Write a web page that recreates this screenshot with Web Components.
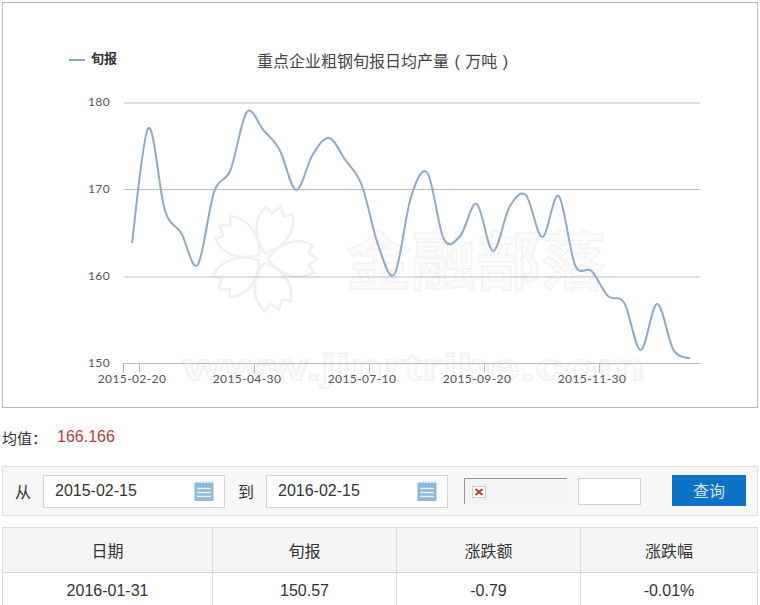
<!DOCTYPE html>
<html lang="zh">
<head>
<meta charset="UTF-8" />
<title>重点企业粗钢旬报日均产量</title>
<style>
  html, body { margin: 0; padding: 0; height: 605px; overflow: hidden; background: #fff; }
  body { padding: 2px 2px 0; box-sizing: border-box; font-family: "Liberation Sans", "Noto Sans CJK SC", sans-serif; color: #333; }
</style>
</head>
<body>
  <chart-panel></chart-panel>
  <avg-line value="166.166">均值：</avg-line>
  <filter-bar>
    <date-field slot="from" value="2015-02-15"></date-field>
    <date-field slot="to" value="2016-02-15"></date-field>
  </filter-bar>
  <data-table></data-table>

<script>
const CJK = '"Liberation Sans", "Noto Sans CJK SC", sans-serif';

// y pixel of every ten-day report, x step is fixed
const POINTS = [243,128,210,233,265,192,170,112,130,150,190,155,138,160,185,245,274,197,173,239,236,204,251,207,195,237,196,265,271,296,303,350,304,350,358.5];

function curvePath(ys) {
	const pts = ys.map((y, i) => [132 + i * 16.41, y]);
	let d = `M${pts[0][0]} ${pts[0][1]}`;
	for (let i = 0; i < pts.length - 1; i++) {
		const p0 = pts[i - 1] || pts[i];
		const p1 = pts[i];
		const p2 = pts[i + 1];
		const p3 = pts[i + 2] || p2;
		const c1x = p1[0] + (p2[0] - p0[0]) / 6;
		const c1y = p1[1] + (p2[1] - p0[1]) / 6;
		const c2x = p2[0] - (p3[0] - p1[0]) / 6;
		const c2y = p2[1] - (p3[1] - p1[1]) / 6;
		d += ` C${c1x.toFixed(1)} ${c1y.toFixed(1)} ${c2x.toFixed(1)} ${c2y.toFixed(1)} ${p2[0].toFixed(1)} ${p2[1]}`;
	}
	return d;
}

class ChartPanel extends HTMLElement {
	constructor() {
		super();
		this.attachShadow({ mode: 'open' });
	}

	connectedCallback() {
		const grid = [[103, '180'], [189.5, '170'], [277, '160'], [363.5, '150']];
		const ticks = [[139, '2015-02-20'], [254, '2015-04-30'], [369, '2015-07-10'], [484, '2015-09-20'], [599, '2015-11-30']];
		const petal = 'M0 -5 C-16 -16 -24 -34 -15 -49 L-8 -45 L-2 -54 L5 -46 L12 -52 C22 -36 16 -16 0 -5 Z';
		this.shadowRoot.innerHTML = `
		<style>
			:host { display: block; height: 406px; box-sizing: border-box; border: 1px solid #b9b9b9; background: #fff; }
			svg { display: block; width: 754px; height: 404px; }
			text { font-family: ${CJK}; }
			.axis { font-family: Lato, sans-serif; font-size: 12px; fill: #555; letter-spacing: 0.4px; }
			.mark { font-weight: 700; fill: #fbfbfb; stroke: #f3f3f3; stroke-width: 1.5; }
		</style>
		<svg viewBox="3 3 754 404">
			<g fill="none" stroke="#f0f0f0" stroke-width="2.5" transform="translate(263 258)">
				${[0, 72, 144, 216, 288].map(a => `<path d="${petal}" transform="rotate(${a + 21})"/>`).join('')}
			</g>
			<text class="mark" x="346" y="284" font-size="63" textLength="260" lengthAdjust="spacingAndGlyphs">金融部落</text>
			<text class="mark" x="183" y="380" font-size="36" textLength="462" lengthAdjust="spacingAndGlyphs">www.jinrtribe.com</text>
			<line x1="69" x2="85" y1="60" y2="60" stroke="#90a8c8" stroke-width="2"/>
			<text x="91" y="63" font-size="13" font-weight="700" fill="#333">旬报</text>
			<text x="257" y="67" font-size="16" fill="#444" word-spacing="1">重点企业粗钢旬报日均产量 ( 万吨 )</text>
			${grid.map(([y, t]) => `
				<line x1="124" x2="700" y1="${y}" y2="${y}" stroke="#b8bcc4"/>
				<text class="axis" x="88" y="${y + 3}">${t}</text>`).join('')}
			<line x1="123.5" x2="123.5" y1="363" y2="373" stroke="#b8bcc4"/>
			${ticks.map(([x, t]) => `
				<line x1="${x + 0.5}" x2="${x + 0.5}" y1="363" y2="373" stroke="#b8bcc4"/>
				<text class="axis" x="${x - 7}" y="383" text-anchor="middle">${t}</text>`).join('')}
			<path d="${curvePath(POINTS)}" fill="none" stroke="#8fa9cb" stroke-width="2"/>
		</svg>`;
	}
}

class AvgLine extends HTMLElement {
	constructor() {
		super();
		this.attachShadow({ mode: 'open' });
	}

	connectedCallback() {
		this.shadowRoot.innerHTML = `
		<style>
			:host { display: flex; align-items: center; height: 58px; font-size: 15px; color: #333; }
			b { font-weight: 400; font-size: 16px; color: #b83b3b; margin-left: 10px; }
		</style>
		<slot></slot><b>${this.getAttribute('value')}</b>`;
	}
}

class DateField extends HTMLElement {
	constructor() {
		super();
		this.attachShadow({ mode: 'open' });
	}

	connectedCallback() {
		this.shadowRoot.innerHTML = `
		<style>
			:host { display: flex; align-items: center; justify-content: space-between; box-sizing: border-box; width: 182px; height: 33px; padding: 0 10px 0 11px; background: #fff; border: 1px solid #d6d6d6; font-size: 16px; color: #333; }
			svg { display: block; width: 20px; height: 20px; }
		</style>
		<span>${this.getAttribute('value')}</span>
		<svg viewBox="0 0 20 20">
			<rect x="0.5" y="2" width="19" height="18" fill="#8db8da"/>
			<path d="M3 0.5V3M6 0.5V3M9 0.5V3M12 0.5V3M15 0.5V3M18 0.5V3" stroke="#8db8da" stroke-width="1.2"/>
			<path d="M3 7.5H17M3 11.5H17M3 15.5H17" stroke="#e8f1f8" stroke-width="1.4"/>
		</svg>`;
	}
}

class FilterBar extends HTMLElement {
	constructor() {
		super();
		this.attachShadow({ mode: 'open' });
	}

	connectedCallback() {
		this.shadowRoot.innerHTML = `
		<style>
			:host { display: flex; align-items: center; box-sizing: border-box; height: 50px; background: #f7f7f7; border: 1px solid #dcdcdc; font-size: 16px; color: #333; }
			.lbl { width: 28px; padding-left: 12px; flex: none; }
			.lbl.to { width: 41px; padding-left: 13px; box-sizing: border-box; }
			.broken { width: 103px; height: 26px; box-sizing: border-box; margin-left: 16px; border-top: 1px solid #9a9a9a; border-left: 1px solid #9a9a9a; background: #f3f3f3; display: flex; align-items: center; padding-left: 7px; }
			.broken svg { display: block; width: 14px; height: 12px; }
			.small { width: 63px; height: 27px; box-sizing: border-box; margin-left: 11px; background: #fff; border: 1px solid #cfcfcf; }
			.go { width: 74px; height: 31px; margin: -2px 0 0 31px; border: 0; padding: 0; background: #0b72c6; color: #cfe4f5; font: 16px ${CJK}; }
		</style>
		<span class="lbl">从</span>
		<slot name="from"></slot>
		<span class="lbl to">到</span>
		<slot name="to"></slot>
		<span class="broken">
			<svg viewBox="0 0 14 12">
				<rect x="0.5" y="0.5" width="13" height="11" fill="#fff" stroke="#cfcfcf"/>
				<path d="M3.5 3L10.5 9M10.5 3L3.5 9" stroke="#c0392b" stroke-width="2"/>
			</svg>
		</span>
		<span class="small"></span>
		<button class="go">查询</button>`;
	}
}

class DataTable extends HTMLElement {
	constructor() {
		super();
		this.attachShadow({ mode: 'open' });
	}

	connectedCallback() {
		const row = (cells, cls) => cells.map(c => `<div class="${cls}">${c}</div>`).join('');
		this.shadowRoot.innerHTML = `
		<style>
			:host { display: grid; grid-template-columns: 210px 184px 184px 1fr; margin-top: 11px; border: 1px solid #dcdcdc; border-bottom: 0; font-size: 16px; color: #333; }
			div { display: flex; align-items: center; justify-content: center; border-right: 1px solid #dcdcdc; }
			div:nth-of-type(4n) { border-right: 0; }
			.h { height: 44px; background: #f5f5f5; border-bottom: 1px solid #d6d6d6; }
			.c { height: 35px; }
		</style>
		${row(['日期', '旬报', '涨跌额', '涨跌幅'], 'h')}
		${row(['2016-01-31', '150.57', '-0.79', '-0.01%'], 'c')}`;
	}
}

customElements.define('chart-panel', ChartPanel);
customElements.define('avg-line', AvgLine);
customElements.define('date-field', DateField);
customElements.define('filter-bar', FilterBar);
customElements.define('data-table', DataTable);
</script>
</body>
</html>
